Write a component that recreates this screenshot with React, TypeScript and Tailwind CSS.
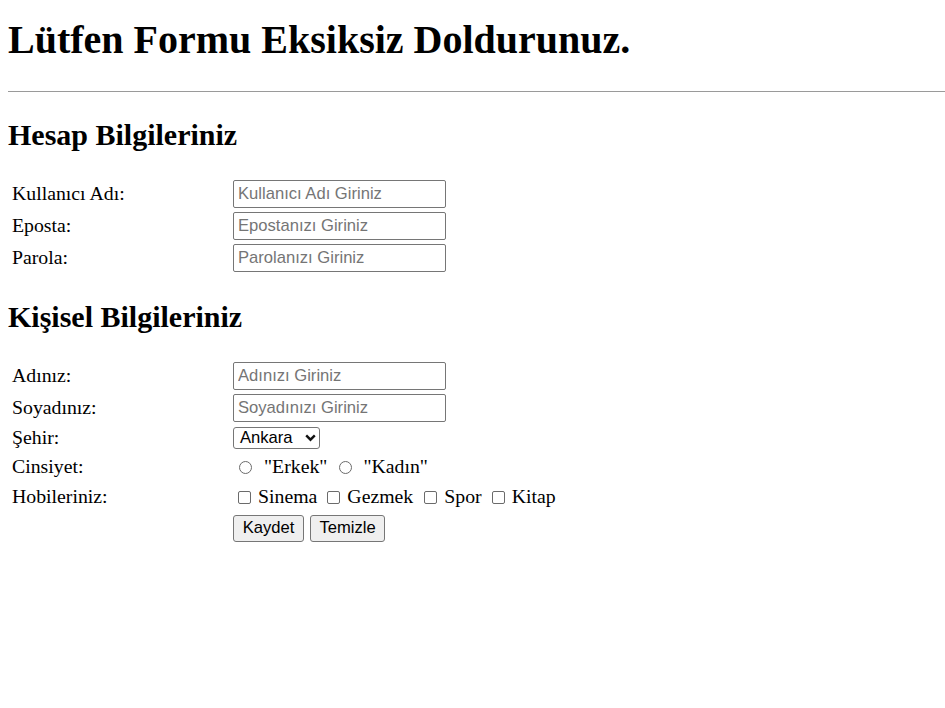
import React from 'react';

const serif = "font-['Liberation_Serif','Times_New_Roman',serif]";
const sans = "font-['Liberation_Sans',Arial,sans-serif]";

const TextField = ({ placeholder }: { placeholder: string }) => (
  <input
    type="text"
    placeholder={placeholder}
    className={`${sans} w-[213px] h-[28px] border border-[#767676] rounded-[2px] bg-white px-[4px] text-[16.6px] text-black placeholder:text-[#757575] outline-none`}
  />
);

const Row = ({ label, h, children }: { label: string; h: string; children: React.ReactNode }) => (
  <div className={`flex items-center ${h}`}>
    <div className="w-[221px] text-[19.8px]">{label}</div>
    <div className="flex items-center">{children}</div>
  </div>
);

const radioCls = 'appearance-none w-[13px] h-[13px] rounded-full border border-[#6b6b6b] bg-white';
const checkCls = 'appearance-none w-[13px] h-[13px] rounded-[2px] border border-[#6b6b6b] bg-white';

export default function App() {
  return (
    <div className={`${serif} min-h-screen bg-white text-black pl-[8px] flex flex-col`}>
      <h1 className="mt-[17px] text-[40px] leading-[46px] font-bold">Lütfen Formu Eksiksiz Doldurunuz.</h1>
      <div className="mt-[28px] border-t border-[#9a9a9a]" />

      <h2 className="mt-[26px] text-[30px] leading-[34px] font-bold">Hesap Bilgileriniz</h2>
      <div className="mt-[26px] pl-[4px] flex flex-col">
        <Row label="Kullanıcı Adı:" h="h-[32px]">
          <TextField placeholder="Kullanıcı Adı Giriniz" />
        </Row>
        <Row label="Eposta:" h="h-[32px]">
          <TextField placeholder="Epostanızı Giriniz" />
        </Row>
        <Row label="Parola:" h="h-[32px]">
          <TextField placeholder="Parolanızı Giriniz" />
        </Row>
      </div>

      <h2 className="mt-[26px] text-[30px] leading-[34px] font-bold">Kişisel Bilgileriniz</h2>
      <div className="mt-[26px] pl-[4px] flex flex-col">
        <Row label="Adınız:" h="h-[32px]">
          <TextField placeholder="Adınızı Giriniz" />
        </Row>
        <Row label="Soyadınız:" h="h-[32px]">
          <TextField placeholder="Soyadınızı Giriniz" />
        </Row>
        <Row label="Şehir:" h="h-[28px]">
          <div className={`${sans} w-[87px] h-[22px] border border-[#767676] rounded-[3px] bg-white flex items-center pl-[6px] pr-[3px] text-[16.6px]`}>
            <span className="flex-1">Ankara</span>
            <svg width="11" height="8" viewBox="0 0 11 8">
              <path d="M1.2 1.4 L5.5 5.7 L9.8 1.4" fill="none" stroke="#111" strokeWidth="2.4" />
            </svg>
          </div>
        </Row>
        <Row label="Cinsiyet:" h="h-[30px]">
          <div className="flex items-center text-[19.8px]">
            <input type="radio" name="cinsiyet" className={`${radioCls} ml-[6px] mr-[12px]`} />
            <span>"Erkek"</span>
            <input type="radio" name="cinsiyet" className={`${radioCls} ml-[12px] mr-[11px]`} />
            <span>"Kadın"</span>
          </div>
        </Row>
        <Row label="Hobileriniz:" h="h-[30px]">
          <div className="flex items-center text-[19.8px]">
            <input type="checkbox" className={`${checkCls} ml-[5px] mr-[7px]`} />
            <span>Sinema</span>
            <input type="checkbox" className={`${checkCls} ml-[10px] mr-[7px]`} />
            <span>Gezmek</span>
            <input type="checkbox" className={`${checkCls} ml-[11px] mr-[7px]`} />
            <span>Spor</span>
            <input type="checkbox" className={`${checkCls} ml-[10px] mr-[7px]`} />
            <span>Kitap</span>
          </div>
        </Row>
        <Row label="" h="h-[32px]">
          <div className={`${sans} flex items-center gap-[6px] text-[16.6px]`}>
            <button className="w-[71px] h-[27px] border border-[#767676] rounded-[3px] bg-[#efefef]">Kaydet</button>
            <button className="w-[75px] h-[27px] border border-[#767676] rounded-[3px] bg-[#efefef]">Temizle</button>
          </div>
        </Row>
      </div>
    </div>
  );
}
